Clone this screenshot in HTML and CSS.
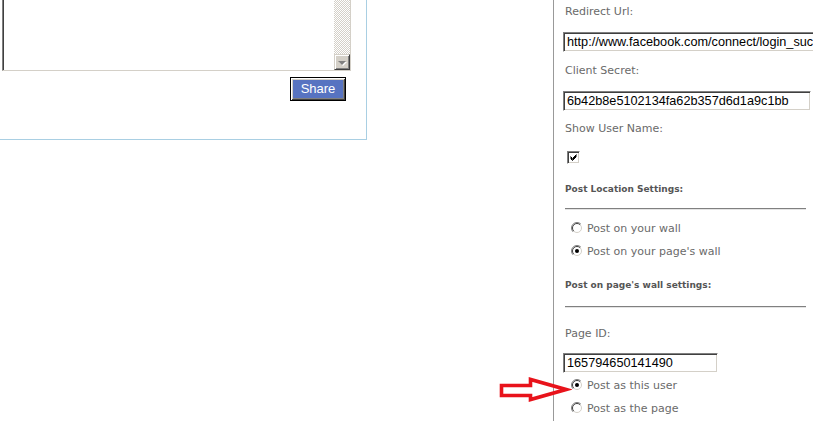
FILE: index.html
```html
<!DOCTYPE html>
<html>
<head>
<meta charset="utf-8">
<link rel="stylesheet" href="styles.css">
</head>
<body>
<div class="page">
  <div class="left">
    <div class="panel">
      <div class="textarea">
        <div class="ta-body"></div>
        <div class="scrollbar">
          <div class="track"></div>
          <div class="arrow-btn"><span class="tri"></span></div>
        </div>
      </div>
      <div class="share-row">
        <button class="share">Share</button>
      </div>
    </div>
  </div>
  <div class="settings">
    <div class="lbl m-first">Redirect Url:</div>
    <div class="inp inp-wide m-inp">http://www.facebook.com/connect/login_success.html</div>
    <div class="lbl m-lbl">Client Secret:</div>
    <div class="inp inp-mid m-inp">6b42b8e5102134fa62b357d6d1a9c1bb</div>
    <div class="lbl m-lbl2">Show User Name:</div>
    <div class="check m-check"><svg width="9" height="9" viewBox="0 0 9 9"><path d="M1.5 3.5 L3.5 5.5 L7.5 1.5 M1.5 4.5 L3.5 6.5 L7.5 2.5 M1.5 5.5 L3.5 7.5 L7.5 3.5" stroke="#000" stroke-width="1" fill="none"/></svg></div>
    <div class="heading m-head">Post Location Settings:</div>
    <div class="rule m-rule1"></div>
    <div class="radio-row m-r1">
      <svg class="radio" width="12" height="12" viewBox="0 0 12 12"><circle cx="6" cy="6" r="5.5" fill="#fff"/><path d="M2.1 9.9 A5.5 5.5 0 0 1 9.9 2.1" stroke="#808080" fill="none"/><path d="M9.9 2.1 A5.5 5.5 0 0 1 2.1 9.9" stroke="#fff" fill="none"/><path d="M2.8 9.2 A4.5 4.5 0 0 1 9.2 2.8" stroke="#404040" fill="none"/><path d="M9.2 2.8 A4.5 4.5 0 0 1 2.8 9.2" stroke="#d4d0c8" fill="none"/></svg>
      <span>Post on your wall</span>
    </div>
    <div class="radio-row m-r2">
      <svg class="radio" width="12" height="12" viewBox="0 0 12 12"><circle cx="6" cy="6" r="5.5" fill="#fff"/><path d="M2.1 9.9 A5.5 5.5 0 0 1 9.9 2.1" stroke="#808080" fill="none"/><path d="M9.9 2.1 A5.5 5.5 0 0 1 2.1 9.9" stroke="#fff" fill="none"/><path d="M2.8 9.2 A4.5 4.5 0 0 1 9.2 2.8" stroke="#404040" fill="none"/><path d="M9.2 2.8 A4.5 4.5 0 0 1 2.8 9.2" stroke="#d4d0c8" fill="none"/><circle cx="6" cy="6" r="2" fill="#000"/></svg>
      <span>Post on your page's wall</span>
    </div>
    <div class="heading m-head2">Post on page's wall settings:</div>
    <div class="rule m-rule2"></div>
    <div class="lbl m-lbl3">Page ID:</div>
    <div class="inp inp-short m-inp3">165794650141490</div>
    <div class="radio-row m-r3">
      <svg class="radio" width="12" height="12" viewBox="0 0 12 12"><circle cx="6" cy="6" r="5.5" fill="#fff"/><path d="M2.1 9.9 A5.5 5.5 0 0 1 9.9 2.1" stroke="#808080" fill="none"/><path d="M9.9 2.1 A5.5 5.5 0 0 1 2.1 9.9" stroke="#fff" fill="none"/><path d="M2.8 9.2 A4.5 4.5 0 0 1 9.2 2.8" stroke="#404040" fill="none"/><path d="M9.2 2.8 A4.5 4.5 0 0 1 2.8 9.2" stroke="#d4d0c8" fill="none"/><circle cx="6" cy="6" r="2" fill="#000"/></svg>
      <span>Post as this user</span>
    </div>
    <div class="radio-row m-r4">
      <svg class="radio" width="12" height="12" viewBox="0 0 12 12"><circle cx="6" cy="6" r="5.5" fill="#fff"/><path d="M2.1 9.9 A5.5 5.5 0 0 1 9.9 2.1" stroke="#808080" fill="none"/><path d="M9.9 2.1 A5.5 5.5 0 0 1 2.1 9.9" stroke="#fff" fill="none"/><path d="M2.8 9.2 A4.5 4.5 0 0 1 9.2 2.8" stroke="#404040" fill="none"/><path d="M9.2 2.8 A4.5 4.5 0 0 1 2.8 9.2" stroke="#d4d0c8" fill="none"/></svg>
      <span>Post as the page</span>
    </div>
  </div>
  <svg class="red-arrow" width="74" height="28" viewBox="498 376 74 28"><path d="M501.5 385.5 L530.5 385.5 L530.5 379.5 L566 389.5 L530.5 399.5 L530.5 395.5 L501.5 395.5 Z" fill="none" stroke="#e8131b" stroke-width="3.6" stroke-linejoin="miter"/></svg>
</div>
</body>
</html>
```
FILE: styles.css
```css
html, body {
  margin: 0;
  padding: 0;
  background: #fff;
}
body {
  width: 813px;
  height: 421px;
  overflow: hidden;
}
.page {
  position: relative;
  display: flex;
  height: 421px;
}
.left {
  width: 553px;
  flex: none;
}
.panel {
  width: 366px;
  height: 139px;
  border-right: 1px solid #a9cfe3;
  border-bottom: 1px solid #a9cfe3;
  box-sizing: content-box;
}
.textarea {
  margin-left: 2px;
  width: 349px;
  height: 71px;
  box-sizing: border-box;
  display: flex;
  border-left: 1px solid #808080;
  border-bottom: 1px solid #d4d0c8;
  border-right: 1px solid #d4d0c8;
}
.ta-body {
  flex: 1;
  border-left: 1px solid #404040;
  background: #fff;
}
.scrollbar {
  width: 16px;
  display: flex;
  flex-direction: column;
}
.track {
  flex: 1;
  background-color: #fff;
  background-image: repeating-conic-gradient(#d4d0c8 0 25%, #fff 0 50%);
  background-size: 2px 2px;
}
.arrow-btn {
  height: 16px;
  box-sizing: border-box;
  background: #d4d0c8;
  border-top: 1px solid #d4d0c8;
  border-left: 1px solid #d4d0c8;
  border-right: 1px solid #404040;
  border-bottom: 1px solid #404040;
  box-shadow: inset 1px 1px #fff, inset -1px -1px #808080;
  display: flex;
  align-items: center;
  justify-content: center;
}
.tri {
  width: 0;
  height: 0;
  border-left: 4px solid transparent;
  border-right: 4px solid transparent;
  border-top: 4px solid #808080;
  margin-top: 1px;
  filter: drop-shadow(1px 1px 0 #fff);
}
.share-row {
  display: flex;
  justify-content: flex-end;
  padding-right: 20px;
  margin-top: 6px;
}
.share {
  width: 56px;
  height: 24px;
  box-sizing: border-box;
  margin: 0;
  padding: 0;
  border: 1px solid #000;
  box-shadow: inset 1px 1px #fff, inset -1px -1px #404040, inset 2px 2px #d4d0c8, inset -2px -2px #808080;
  background: #5773c1;
  color: #fff;
  font-family: "Liberation Sans", Arial, sans-serif;
  font-size: 13px;
  line-height: 20px;
}
.settings {
  flex: 1;
  border-left: 1px solid #999;
  padding-left: 11px;
  font-family: "DejaVu Sans", Verdana, sans-serif;
  font-size: 11px;
  color: #6a6a6a;
  min-width: 0;
}
.lbl {
  line-height: 16px;
  white-space: nowrap;
}
.inp {
  margin-left: -2px;
  height: 20px;
  box-sizing: border-box;
  border-top: 1px solid #808080;
  border-left: 1px solid #808080;
  border-bottom: 1px solid #fff;
  border-right: 1px solid #fff;
  box-shadow: inset 1px 1px #404040, inset -1px -1px #d4d0c8;
  font-family: "Liberation Sans", Arial, sans-serif;
  font-size: 12.7px;
  line-height: 18px;
  color: #000;
  padding-left: 3px;
  white-space: nowrap;
  overflow: hidden;
}
.inp-wide { width: 290px; }
.inp-mid { width: 248px; }
.inp-short { width: 155px; }
.check {
  margin-left: 2px;
  width: 13px;
  height: 13px;
  box-sizing: border-box;
  border-top: 1px solid #808080;
  border-left: 1px solid #808080;
  border-bottom: 1px solid #fff;
  border-right: 1px solid #fff;
  box-shadow: inset 1px 1px #404040, inset -1px -1px #d4d0c8;
  background: #fff;
  display: flex;
  align-items: center;
  justify-content: center;
}
.check svg { display: block; }
.heading {
  font-weight: bold;
  font-size: 9px;
  line-height: 16px;
  color: #555;
  white-space: nowrap;
}
.rule {
  width: 241px;
  height: 0;
  border-top: 1px solid #808080;
  border-bottom: 1px solid #e4e4e4;
}
.radio-row {
  display: flex;
  align-items: center;
  height: 18px;
  margin-left: 6px;
  white-space: nowrap;
}
.radio {
  display: block;
  flex: none;
  margin-right: 4px;
}
.m-first { margin-top: 4px; }
.m-inp { margin-top: 12px; }
.m-lbl { margin-top: 11px; }
.m-lbl2 { margin-top: 10px; }
.m-check { margin-top: 14px; }
.m-head { margin-top: 17px; }
.m-rule1 { margin-top: 11px; }
.m-r1 { margin-top: 9px; }
.m-r2 { margin-top: 5px; }
.m-head2 { margin-top: 17px; }
.m-rule2 { margin-top: 13px; }
.m-lbl3 { margin-top: 18px; }
.m-inp3 { margin-top: 11px; }
.m-r3 { margin-top: 3px; }
.m-r4 { margin-top: 5px; }
.red-arrow {
  position: absolute;
  left: 498px;
  top: 376px;
}
```
